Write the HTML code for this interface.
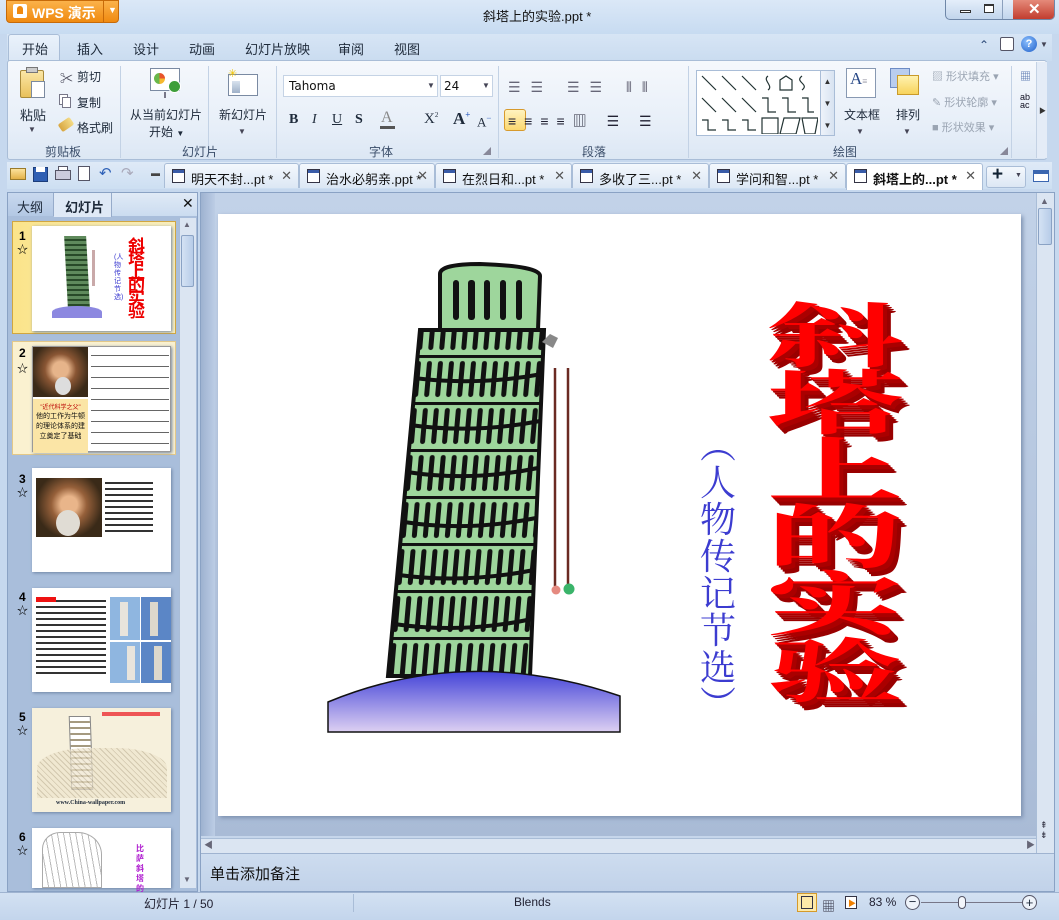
<!DOCTYPE html>
<html><head><meta charset="utf-8">
<style>
*{margin:0;padding:0;box-sizing:border-box}
body{width:1059px;height:920px;overflow:hidden;background:#c6d8ee;font-family:"Liberation Sans","Noto Sans CJK SC",sans-serif;font-size:12px;color:#1e2a3a;position:relative}
.a{position:absolute}
.grp{position:absolute;top:143px;font-size:12px;color:#3b4e6a}
.sep{position:absolute;top:66px;width:1px;height:92px;background:#c3d2e5}
.tab{position:absolute;top:163px;height:25px;background:linear-gradient(#f4f8fd,#dce7f4);border:1px solid #a9bdd7;border-bottom:none;border-radius:3px 3px 0 0;font-size:13px;color:#111;padding:5px 0 0 26px}
.tab i{position:absolute;left:7px;top:5px;width:13px;height:14px;border:1px solid #334;background:#fff}
.tab i:before{content:"";position:absolute;left:0;right:0;top:0;height:3px;background:#3a5ca8}
.tab b{position:absolute;right:6px;top:4px;font-weight:normal;color:#555;font-size:13px}
.thumb{position:absolute;left:32px;width:139px;background:#fff;box-shadow:1px 1px 3px #6f84a4}
.num{position:absolute;left:19px;font-weight:bold;font-size:12px;color:#000}
.star{position:absolute;left:17px;font-size:11px;color:#000}
</style></head><body>
<div class="a" style="left:0;top:0;width:1059px;height:34px;background:linear-gradient(#dbe8f7,#c7dbf1)"></div>
<div class="a" style="left:6px;top:0;width:113px;height:23px;background:linear-gradient(#fbb24a,#f08a10);border:1px solid #c76a08;border-radius:0 0 4px 4px"></div>
<div class="a" style="left:13px;top:4px;width:14px;height:14px;background:#fff;border-radius:2px"></div>
<div class="a" style="left:17px;top:6px;width:6px;height:8px;background:#f08a10;border-radius:3px 3px 0 0"></div>
<div class="a" style="left:32px;top:3px;color:#fff;font-size:14px;font-weight:bold">WPS 演示</div>
<div class="a" style="left:103px;top:0;width:1px;height:22px;background:#c76a08"></div>
<div class="a" style="left:108px;top:5px;color:#fff;font-size:9px">▼</div>
<div class="a" style="left:483px;top:6px;font-size:13px;color:#111">斜塔上的实验.ppt *</div>
<div class="a" style="left:945px;top:0;width:110px;height:20px;border:1px solid #6f87a8;border-top:none;border-radius:0 0 5px 5px;background:linear-gradient(#e4eefa,#c2d5ec);overflow:hidden">
 <div class="a" style="left:56px;top:0;width:1px;height:20px;background:#8ba0bd"></div>
 <div class="a" style="left:67px;top:0;width:43px;height:20px;background:linear-gradient(#e58a7a,#c0392b)"></div>
 <div class="a" style="left:14px;top:10px;width:11px;height:3px;border:1px solid #333;background:#fff"></div>
 <div class="a" style="left:38px;top:4px;width:10px;height:9px;border:1px solid #333;border-top-width:2px;background:#fff"></div>
 <div class="a" style="left:82px;top:0;color:#fff;font-size:15px;font-weight:bold">✕</div>
</div>
<div class="a" style="left:7px;top:34px;width:1045px;height:27px;background:linear-gradient(#d7e5f5,#cadcf0)"></div>
<div class="a" style="left:8px;top:34px;width:52px;height:27px;background:linear-gradient(#eaf2fb,#dbe7f5);border:1px solid #a9bdd7;border-bottom:none;border-radius:3px 3px 0 0"></div>
<div class="a" style="left:22px;top:39px;font-size:13px">开始</div>
<div class="a" style="left:77px;top:39px;font-size:13px">插入</div>
<div class="a" style="left:133px;top:39px;font-size:13px">设计</div>
<div class="a" style="left:189px;top:39px;font-size:13px">动画</div>
<div class="a" style="left:245px;top:39px;font-size:13px">幻灯片放映</div>
<div class="a" style="left:338px;top:39px;font-size:13px">审阅</div>
<div class="a" style="left:394px;top:39px;font-size:13px">视图</div>
<div class="a" style="left:979px;top:38px;font-size:12px;color:#2c4a78">⌃</div>
<div class="a" style="left:1000px;top:37px;width:14px;height:14px;border:1px solid #556;border-radius:2px;background:#fff"></div>
<div class="a" style="left:1021px;top:36px;width:16px;height:16px;border-radius:8px;background:radial-gradient(circle at 40% 35%,#8cc0ff,#1f5fc8);color:#fff;font-weight:bold;font-size:11px;text-align:center;line-height:16px">?</div>
<div class="a" style="left:1040px;top:40px;font-size:8px;color:#445">▼</div>
<div class="a" style="left:7px;top:60px;width:1040px;height:100px;background:linear-gradient(#f5f8fc,#e6eef8 70%,#dce7f4);border:1px solid #a9bdd7;border-radius:3px"></div>
<div class="a" style="left:20px;top:70px;width:24px;height:28px;background:linear-gradient(#fbe7a6,#e9c15b);border:1px solid #a88a3a;border-radius:2px"></div>
<div class="a" style="left:26px;top:67px;width:12px;height:6px;background:#ccc;border:1px solid #777"></div>
<div class="a" style="left:31px;top:81px;width:14px;height:17px;background:#fff;border:1px solid #7b8aa0"></div>
<div class="a" style="left:20px;top:105px;font-size:13px">粘贴</div>
<div class="a" style="left:28px;top:125px;font-size:8px;color:#445">▼</div>
<div class="a" style="left:60px;top:68px;font-size:13px;color:#445">✂</div>
<div class="a" style="left:77px;top:68px;font-size:12px">剪切</div>
<div class="a" style="left:59px;top:94px;width:9px;height:11px;border:1px solid #778;background:#fff"></div>
<div class="a" style="left:62px;top:97px;width:9px;height:11px;border:1px solid #778;background:#fff"></div>
<div class="a" style="left:77px;top:94px;font-size:12px">复制</div>
<div class="a" style="left:59px;top:120px;width:14px;height:9px;background:linear-gradient(90deg,#d8a640,#f4dc88);transform:rotate(-35deg);border-radius:2px"></div>
<div class="a" style="left:77px;top:119px;font-size:12px">格式刷</div>
<div class="grp" style="left:45px">剪贴板</div>
<div class="sep" style="left:120px"></div>
<div class="a" style="left:150px;top:68px;width:30px;height:23px;background:#fff;border:1px solid #7a8aa2"></div>
<div class="a" style="left:154px;top:73px;width:11px;height:11px;border-radius:6px;background:conic-gradient(#e8542b 0 25%,#f5b82e 25% 50%,#69b74a 50%)"></div>
<div class="a" style="left:168px;top:80px;width:13px;height:13px;border-radius:7px;background:#3d9e3a;border:1px solid #fff"></div>
<div class="a" style="left:164px;top:92px;width:2px;height:6px;background:#778"></div>
<div class="a" style="left:130px;top:106px;font-size:12px">从当前幻灯片</div>
<div class="a" style="left:149px;top:123px;font-size:12px">开始 <span style="font-size:8px">▼</span></div>
<div class="sep" style="left:208px"></div>
<div class="a" style="left:228px;top:74px;width:30px;height:22px;background:#fff;border:1px solid #7a8aa2"></div>
<div class="a" style="left:232px;top:81px;width:8px;height:12px;background:linear-gradient(#d8e2ee,#9fb1c8)"></div>
<div class="a" style="left:228px;top:67px;font-size:11px;color:#f2c400">✳</div>
<div class="a" style="left:219px;top:106px;font-size:12px">新幻灯片</div>
<div class="a" style="left:238px;top:127px;font-size:8px;color:#445">▼</div>
<div class="grp" style="left:182px">幻灯片</div>
<div class="sep" style="left:276px"></div>
<div class="a" style="left:283px;top:75px;width:155px;height:22px;background:#fff;border:1px solid #c5d3e5"></div>
<div class="a" style="left:289px;top:79px;font-family:'DejaVu Sans',sans-serif;font-size:12px;color:#111">Tahoma</div>
<div class="a" style="left:427px;top:81px;font-size:8px;color:#445">▼</div>
<div class="a" style="left:440px;top:75px;width:53px;height:22px;background:#fff;border:1px solid #c5d3e5"></div>
<div class="a" style="left:444px;top:79px;font-family:'DejaVu Sans',sans-serif;font-size:12px;color:#111">24</div>
<div class="a" style="left:482px;top:81px;font-size:8px;color:#445">▼</div>
<div class="a" style="left:289px;top:112px;font-family:'Liberation Serif',serif;font-weight:bold;font-size:14px">B</div>
<div class="a" style="left:312px;top:112px;font-family:'Liberation Serif',serif;font-style:italic;font-size:14px">I</div>
<div class="a" style="left:332px;top:112px;font-family:'Liberation Serif',serif;text-decoration:underline;font-size:14px">U</div>
<div class="a" style="left:355px;top:112px;font-family:'Liberation Serif',serif;font-weight:bold;font-size:14px">S</div>
<div class="a" style="left:381px;top:109px;font-family:'Liberation Serif',serif;font-size:16px;color:#888">A</div>
<div class="a" style="left:380px;top:126px;width:15px;height:3px;background:#555"></div>
<div class="a" style="left:424px;top:111px;font-family:'Liberation Serif',serif;font-size:15px">X<sup style="font-size:7px">2</sup></div>
<div class="a" style="left:453px;top:109px;font-family:'Liberation Serif',serif;font-weight:bold;font-size:17px">A<sup style="font-size:9px;color:#3060c0">+</sup></div>
<div class="a" style="left:477px;top:113px;font-family:'Liberation Serif',serif;font-size:13px">A<sup style="font-size:9px;color:#3060c0">−</sup></div>
<div class="grp" style="left:369px">字体</div>
<div class="a" style="left:483px;top:146px;font-size:8px;color:#889">◢</div>
<div class="sep" style="left:498px"></div>
<div class="a" style="left:508px;top:79px;font-size:14px;color:#667;letter-spacing:10px">☰☰ ☰☰ ⫴⫴</div>
<div class="a" style="left:504px;top:109px;width:22px;height:22px;background:linear-gradient(#fff3c0,#fbd870);border:1px solid #d79a2d;border-radius:3px"></div>
<div class="a" style="left:508px;top:111px;font-size:14px;color:#223;letter-spacing:8px">≡≡≡≡▥ ☰ ☰</div>
<div class="grp" style="left:582px">段落</div>
<div class="sep" style="left:688px"></div>
<div class="a" style="left:696px;top:70px;width:139px;height:66px;background:#fff;border:1px solid #a9bdd7"></div>
<div class="a" style="left:820px;top:70px;width:15px;height:66px;background:linear-gradient(90deg,#eef3fa,#d8e3f1);border:1px solid #a9bdd7;font-size:8px;text-align:center;line-height:22px;color:#333">▲<br>▼<br>▼</div>
<svg class="a" style="left:698px;top:72px" width="120" height="62" stroke="#233" fill="none" stroke-width="1.2">
<path d="M4 4 L18 18M24 4L38 18M44 4L58 18M70 4c-6 4 6 10 0 14M82 18V8l6-4 6 4v10zM104 4c-8 6 8 8 0 14"/>
<path d="M4 26L18 40M24 26L38 40M44 26L58 40M64 26h6v14h8M84 26h6v14h8M104 26h6v14h6"/>
<path d="M4 48h6v10h8M24 48h6v10h8M44 48h6v10h8M64 46h16v16H64zM86 46h16l-4 16H82zM104 46h16l-3 16h-10z"/>
</svg>
<div class="a" style="left:846px;top:68px;width:30px;height:30px;background:#fff;border:1px solid #8899b2;font-family:'Liberation Serif',serif;font-size:17px;color:#2a4a88;padding-left:3px">A<span style="font-size:9px;color:#889">≡</span></div>
<div class="a" style="left:844px;top:106px;font-size:12px">文本框</div>
<div class="a" style="left:856px;top:127px;font-size:8px;color:#445">▼</div>
<div class="a" style="left:890px;top:68px;width:20px;height:20px;background:#b9cdef;border:1px solid #6d8cc4"></div>
<div class="a" style="left:897px;top:75px;width:22px;height:20px;background:linear-gradient(#fff2b0,#f7d35c);border:1px solid #c99a2b"></div>
<div class="a" style="left:896px;top:106px;font-size:12px">排列</div>
<div class="a" style="left:903px;top:127px;font-size:8px;color:#445">▼</div>
<div class="a" style="left:932px;top:68px;font-size:11px;color:#9aa4b2">▨ 形状填充 ▾</div>
<div class="a" style="left:932px;top:94px;font-size:11px;color:#9aa4b2">✎ 形状轮廓 ▾</div>
<div class="a" style="left:932px;top:119px;font-size:11px;color:#9aa4b2">■ 形状效果 ▾</div>
<div class="grp" style="left:833px">绘图</div>
<div class="a" style="left:1000px;top:146px;font-size:8px;color:#889">◢</div>
<div class="sep" style="left:1011px"></div>
<div class="a" style="left:1020px;top:68px;font-size:11px;color:#4a6aa8">▦</div>
<div class="a" style="left:1020px;top:93px;font-size:9px;color:#112;line-height:8px">ab<br>ac</div>
<div class="a" style="left:1036px;top:62px;width:11px;height:96px;background:#e4ecf7;border-left:1px solid #c4d2e4"></div>
<div class="a" style="left:1039px;top:106px;font-size:7px;color:#333">▶</div>
<div class="a" style="left:7px;top:162px;width:1045px;height:27px;background:linear-gradient(#dfeaf7,#cddff2)"></div>
<div class="a" style="left:10px;top:168px;width:16px;height:12px;background:linear-gradient(#fbe29c,#e3b248);border:1px solid #9a7a2a"></div>
<div class="a" style="left:33px;top:167px;width:15px;height:15px;background:#2f5fb3;border:1px solid #1c3d7a"></div>
<div class="a" style="left:36px;top:167px;width:9px;height:5px;background:#fff"></div>
<div class="a" style="left:55px;top:170px;width:16px;height:10px;background:#ccd;border:1px solid #556"></div>
<div class="a" style="left:58px;top:166px;width:10px;height:5px;background:#fff;border:1px solid #556"></div>
<div class="a" style="left:78px;top:166px;width:12px;height:15px;background:#fff;border:1px solid #556"></div>
<div class="a" style="left:99px;top:164px;font-size:15px;color:#2f62b8">↶</div>
<div class="a" style="left:121px;top:164px;font-size:15px;color:#aab">↷</div>
<div class="a" style="left:151px;top:168px;font-size:9px;color:#444">▬</div>
<div class="tab" style="left:164px;width:135px">明天不封...pt *<i></i><b>✕</b></div>
<div class="tab" style="left:299px;width:136px">治水必躬亲.ppt *<i></i><b>✕</b></div>
<div class="tab" style="left:435px;width:137px">在烈日和...pt *<i></i><b>✕</b></div>
<div class="tab" style="left:572px;width:137px">多收了三...pt *<i></i><b>✕</b></div>
<div class="tab" style="left:709px;width:137px">学问和智...pt *<i></i><b>✕</b></div>
<div class="tab" style="left:846px;width:137px;background:#fff;height:27px;font-weight:bold">斜塔上的...pt *<i></i><b>✕</b></div>
<div class="a" style="left:986px;top:166px;width:40px;height:22px;border:1px solid #a9bdd7;border-radius:3px;background:linear-gradient(#f4f8fd,#dce7f4)"></div>
<div class="a" style="left:992px;top:164px;font-size:19px;font-weight:bold;color:#123">+</div>
<div class="a" style="left:1015px;top:172px;font-size:7px;color:#445">▼</div>
<div class="a" style="left:1033px;top:170px;width:16px;height:12px;border:1px solid #3a66b0;border-top:4px solid #3a66b0;background:#fff"></div>
<div class="a" style="left:7px;top:192px;width:191px;height:700px;background:#a9bedb;border:1px solid #8aa2c4"></div>
<div class="a" style="left:8px;top:193px;width:189px;height:23px;background:linear-gradient(#e0eaf6,#cbdcf0)"></div>
<div class="a" style="left:8px;top:193px;width:46px;height:23px;background:linear-gradient(#c8d8ee,#b3c8e4);border-right:1px solid #96abca"></div>
<div class="a" style="left:17px;top:197px;font-size:13px">大纲</div>
<div class="a" style="left:54px;top:193px;width:58px;height:24px;background:#dfe9f6;border-right:1px solid #96abca"></div>
<div class="a" style="left:65px;top:197px;font-size:13px;font-weight:bold">幻灯片</div>
<div class="a" style="left:182px;top:195px;font-size:14px;color:#111">✕</div>
<div class="a" style="left:179px;top:218px;width:17px;height:670px;background:#dbe5f2;border-left:1px solid #a9bdd7"></div>
<div class="a" style="left:181px;top:235px;width:13px;height:52px;background:linear-gradient(90deg,#d4e2f4,#b7cce8);border:1px solid #8aa2c4;border-radius:2px"></div>
<div class="a" style="left:183px;top:220px;font-size:8px;color:#667">▲</div>
<div class="a" style="left:183px;top:875px;font-size:8px;color:#667">▼</div>
<div class="a" style="left:12px;top:221px;width:164px;height:113px;background:linear-gradient(90deg,#fbe48a,#f8eebf);border:1px solid #d1a640"></div>
<div class="thumb" style="top:226px;height:105px">
 <div class="a" style="left:34px;top:10px;width:22px;height:72px;background:repeating-linear-gradient(#5f8a5c 0 3px,#284a28 3px 5px);transform:skewX(3deg)"></div>
 <div class="a" style="left:20px;top:80px;width:50px;height:12px;border-radius:50% 50% 0 0;background:#8c88e0"></div>
 <div class="a" style="left:60px;top:24px;width:3px;height:36px;background:#c9a9a9"></div>
 <div class="a" style="left:82px;top:28px;width:7px;height:56px;color:#3a3ad0;font-size:7px;line-height:8px">(人物传记节选)</div>
 <div class="a" style="left:96px;top:14px;width:22px;color:#e00;font-weight:bold;font-size:17px;line-height:13px">斜塔上的实验</div>
</div>
<div class="num" style="top:229px">1</div><div class="star" style="top:241px">☆</div>
<div class="a" style="left:12px;top:341px;width:164px;height:114px;background:#faf1d0;border:1px solid #e3c888"></div>
<div class="thumb" style="top:346px;height:106px;border:1px solid #999">
 <div class="a" style="left:0;top:0;width:55px;height:50px;background:radial-gradient(circle at 50% 45%,#e6b48a 0 20%,#8a5634 40%,#3a2a18 75%)"></div>
 <div class="a" style="left:22px;top:30px;width:16px;height:18px;background:#ddd;border-radius:50%"></div>
 <div class="a" style="left:0;top:52px;width:55px;height:54px;background:#fbe5a6;font-size:6px;color:#b00;text-align:center;padding-top:3px">"近代科学之父"<br><span style="color:#111;font-size:7px">他的工作为牛顿的理论体系的建立奠定了基础</span></div>
 <div class="a" style="left:58px;top:3px;width:78px;height:100px;background:repeating-linear-gradient(#fff 0 5px,#666 5px 6px,#fff 6px 11px)"></div>
</div>
<div class="num" style="top:346px">2</div><div class="star" style="top:360px">☆</div>
<div class="thumb" style="top:468px;height:104px">
 <div class="a" style="left:4px;top:10px;width:66px;height:59px;background:radial-gradient(circle at 50% 45%,#e9b58a 0 18%,#96603a 38%,#3a2a18 72%)"></div>
 <div class="a" style="left:24px;top:42px;width:24px;height:26px;background:#e0dcd4;border-radius:50%"></div>
 <div class="a" style="left:73px;top:10px;width:48px;height:58px;background:repeating-linear-gradient(#fff 0 4px,#333 4px 6px)"></div>
</div>
<div class="num" style="top:472px">3</div><div class="star" style="top:484px">☆</div>
<div class="thumb" style="top:588px;height:104px">
 <div class="a" style="left:4px;top:8px;width:70px;height:80px;background:repeating-linear-gradient(#fff 0 4px,#333 4px 6px)"></div>
 <div class="a" style="left:4px;top:9px;width:20px;height:5px;background:#e11"></div>
 <div class="a" style="left:78px;top:9px;width:61px;height:86px;background:linear-gradient(90deg,#8fb6e0 49%,#fff 49% 51%,#5b86c6 51%);"></div>
 <div class="a" style="left:78px;top:52px;width:61px;height:2px;background:#fff"></div>
 <div class="a" style="left:88px;top:14px;width:8px;height:34px;background:#e8e4dc"></div>
 <div class="a" style="left:118px;top:14px;width:8px;height:34px;background:#ddd8cc"></div>
 <div class="a" style="left:95px;top:58px;width:8px;height:34px;background:#e8e4dc"></div>
 <div class="a" style="left:122px;top:58px;width:8px;height:34px;background:#ddd8cc"></div>
</div>
<div class="num" style="top:590px">4</div><div class="star" style="top:602px">☆</div>
<div class="thumb" style="top:708px;height:104px;background:#f6f0dc">
 <div class="a" style="left:38px;top:8px;width:22px;height:74px;background:repeating-linear-gradient(#fff 0 4px,#a59a80 4px 6px);border:1px solid #888;transform:skewX(2deg)"></div>
 <div class="a" style="left:5px;top:40px;width:130px;height:50px;background:repeating-linear-gradient(45deg,#eee4cc 0 3px,#c4b89c 3px 4px);opacity:.7;border-radius:40% 40% 0 0"></div>
 <div class="a" style="left:70px;top:4px;width:58px;height:4px;background:#e55"></div>
 <div class="a" style="left:24px;top:92px;font-size:6px;font-family:'Liberation Serif',serif;font-weight:bold">www.China-wallpaper.com</div>
</div>
<div class="num" style="top:710px">5</div><div class="star" style="top:722px">☆</div>
<div class="thumb" style="top:828px;height:60px">
 <div class="a" style="left:10px;top:4px;width:60px;height:56px;border:1px solid #aaa;border-radius:30% 40% 0 0;background:repeating-linear-gradient(80deg,#fff 0 5px,#bbb 5px 6px)"></div>
 <div class="a" style="left:104px;top:16px;width:10px;color:#b020d0;font-size:8px;font-weight:bold;line-height:10px">比萨斜塔的</div>
</div>
<div class="num" style="top:830px">6</div><div class="star" style="top:842px">☆</div>
<div class="a" style="left:200px;top:192px;width:855px;height:700px;background:#c6d6eb;border:1px solid #8aa2c4"></div>
<div class="a" style="left:201px;top:193px;width:835px;height:643px;background:linear-gradient(#c2d2e8,#a9bbd6)"></div>
<div class="a" style="left:201px;top:193px;width:14px;height:643px;background:linear-gradient(90deg,#9eb2d0,#bccde5)"></div>
<div class="a" style="left:1036px;top:193px;width:18px;height:660px;background:#dbe5f2;border-left:1px solid #a9bdd7"></div>
<div class="a" style="left:1040px;top:196px;font-size:9px;color:#667">▲</div>
<div class="a" style="left:1038px;top:208px;width:14px;height:37px;background:linear-gradient(90deg,#d4e2f4,#b7cce8);border:1px solid #8aa2c4;border-radius:2px"></div>
<div class="a" style="left:1040px;top:820px;font-size:9px;color:#334;line-height:10px">⇞<br>⇟</div>
<div class="a" style="left:201px;top:838px;width:835px;height:15px;background:#dbe5f2;border-top:1px solid #a9bdd7"></div>
<div class="a" style="left:204px;top:838px;font-size:9px;color:#667">◀</div>
<div class="a" style="left:1026px;top:838px;font-size:9px;color:#667">▶</div>
<div class="a" style="left:201px;top:853px;width:853px;height:38px;background:linear-gradient(#cddcef,#c1d2e9);border-top:1px solid #9fb3d0"></div>
<div class="a" style="left:210px;top:863px;font-size:15px;color:#111">单击添加备注</div>
<div class="a" style="left:218px;top:214px;width:803px;height:602px;background:#fff;box-shadow:2px 2px 4px #7d91b0"></div>
<svg class="a" style="left:218px;top:214px" width="803" height="602">
<defs>
 <linearGradient id="dome" x1="0" y1="0" x2="0" y2="1"><stop offset="0" stop-color="#4444d8"/><stop offset="1" stop-color="#ddd0f2"/></linearGradient>
 <pattern id="cols" width="11" height="47" patternUnits="userSpaceOnUse" patternTransform="skewX(-5)">
  <rect width="11" height="47" fill="#9ed69c"/>
  <rect x="2" y="6" width="5" height="36" rx="2.5" fill="#111"/>
  <rect x="0" y="0" width="11" height="3" fill="#111"/>
 </pattern>
 <clipPath id="tw"><path d="M202 116 L326 116 L312 462 L170 462 Z"/></clipPath>
</defs>
<path d="M222 60 Q222 50 262 50 Q322 52 322 62 L320 116 L222 116 Z" fill="#9ed69c" stroke="#111" stroke-width="4"/>
<g fill="#111"><rect x="235" y="66" width="6" height="40" rx="3"/><rect x="250" y="66" width="7" height="40" rx="3"/><rect x="266" y="66" width="6" height="40" rx="3"/><rect x="282" y="66" width="6" height="40" rx="3"/><rect x="298" y="66" width="6" height="40" rx="3"/></g>
<path d="M202 116 L326 116 L312 462 L170 462 Z" fill="url(#cols)" stroke="#111" stroke-width="4"/>
<g clip-path="url(#tw)" stroke="#111" stroke-width="4" fill="none">
<path d="M196 164 Q260 172 324 160M192 211 Q255 220 322 207M189 258 Q252 268 320 254M186 308 Q250 318 318 304M181 361 Q246 370 316 356M176 410 Q244 420 314 405"/>
</g>
<path d="M324 128 l8 -8 l8 4 -5 10z" fill="#888"/>
<line x1="337" y1="154" x2="337" y2="372" stroke="#6b2a22" stroke-width="2.5"/>
<line x1="350" y1="154" x2="350" y2="372" stroke="#6b2a22" stroke-width="2.5"/>
<circle cx="338" cy="376" r="4.5" fill="#e58a80"/>
<circle cx="351" cy="375" r="5.5" fill="#3ab46a"/>
<path d="M110 488 Q250 430 402 482 L402 518 L110 518 Z" fill="url(#dome)" stroke="#111" stroke-width="1.5"/>
</svg>
<div class="a" style="left:697px;top:428px;width:42px;font-size:36px;line-height:37px;color:#3c3cd0;text-align:center;font-family:'Liberation Serif','Noto Serif CJK SC',serif">︵<br>人<br>物<br>传<br>记<br>节<br>选<br>︶</div>
<div class="a" style="left:800px;top:298px;width:70px;font-size:70px;line-height:67px;color:#ff0000;font-weight:bold;text-align:center;transform:scaleX(1.95);transform-origin:center top;text-shadow:1px 2px 0 #a00,2px 4px 0 #a00,3px 6px 0 #900,4px 8px 0 #900;font-family:'Noto Serif CJK SC','Noto Sans CJK SC',serif">斜<br>塔<br>上<br>的<br>实<br>验</div>
<div class="a" style="left:0;top:892px;width:1059px;height:28px;background:linear-gradient(#d3e1f2,#c3d5ec);border-top:1px solid #9fb3d0"></div>
<div class="a" style="left:144px;top:895px;font-size:12px;color:#223">幻灯片 1 / 50</div>
<div class="a" style="left:353px;top:894px;width:1px;height:18px;background:#a9bdd7"></div>
<div class="a" style="left:514px;top:895px;font-size:12px;color:#223">Blends</div>
<div class="a" style="left:797px;top:893px;width:20px;height:19px;background:#fde9a8;border:1px solid #d59a2a"></div>
<div class="a" style="left:801px;top:896px;width:12px;height:13px;border:1px solid #334"></div>
<div class="a" style="left:822px;top:896px;font-size:13px;color:#334">▦</div>
<div class="a" style="left:845px;top:896px;width:12px;height:13px;border:1px solid #334;background:#fff"></div>
<div class="a" style="left:848px;top:898px;font-size:8px;color:#f08000">▶</div>
<div class="a" style="left:869px;top:895px;font-size:12px;color:#223">83 %</div>
<div class="a" style="left:905px;top:895px;width:15px;height:15px;border-radius:8px;border:1px solid #556;background:#eef3fa;text-align:center;line-height:12px;font-size:13px">−</div>
<div class="a" style="left:921px;top:902px;width:101px;height:1px;background:#778"></div>
<div class="a" style="left:958px;top:896px;width:8px;height:13px;border:1px solid #556;border-radius:4px;background:#f3f6fb"></div>
<div class="a" style="left:1022px;top:895px;width:15px;height:15px;border-radius:8px;border:1px solid #556;background:#eef3fa;text-align:center;line-height:13px;font-size:13px">+</div>
</body></html>
